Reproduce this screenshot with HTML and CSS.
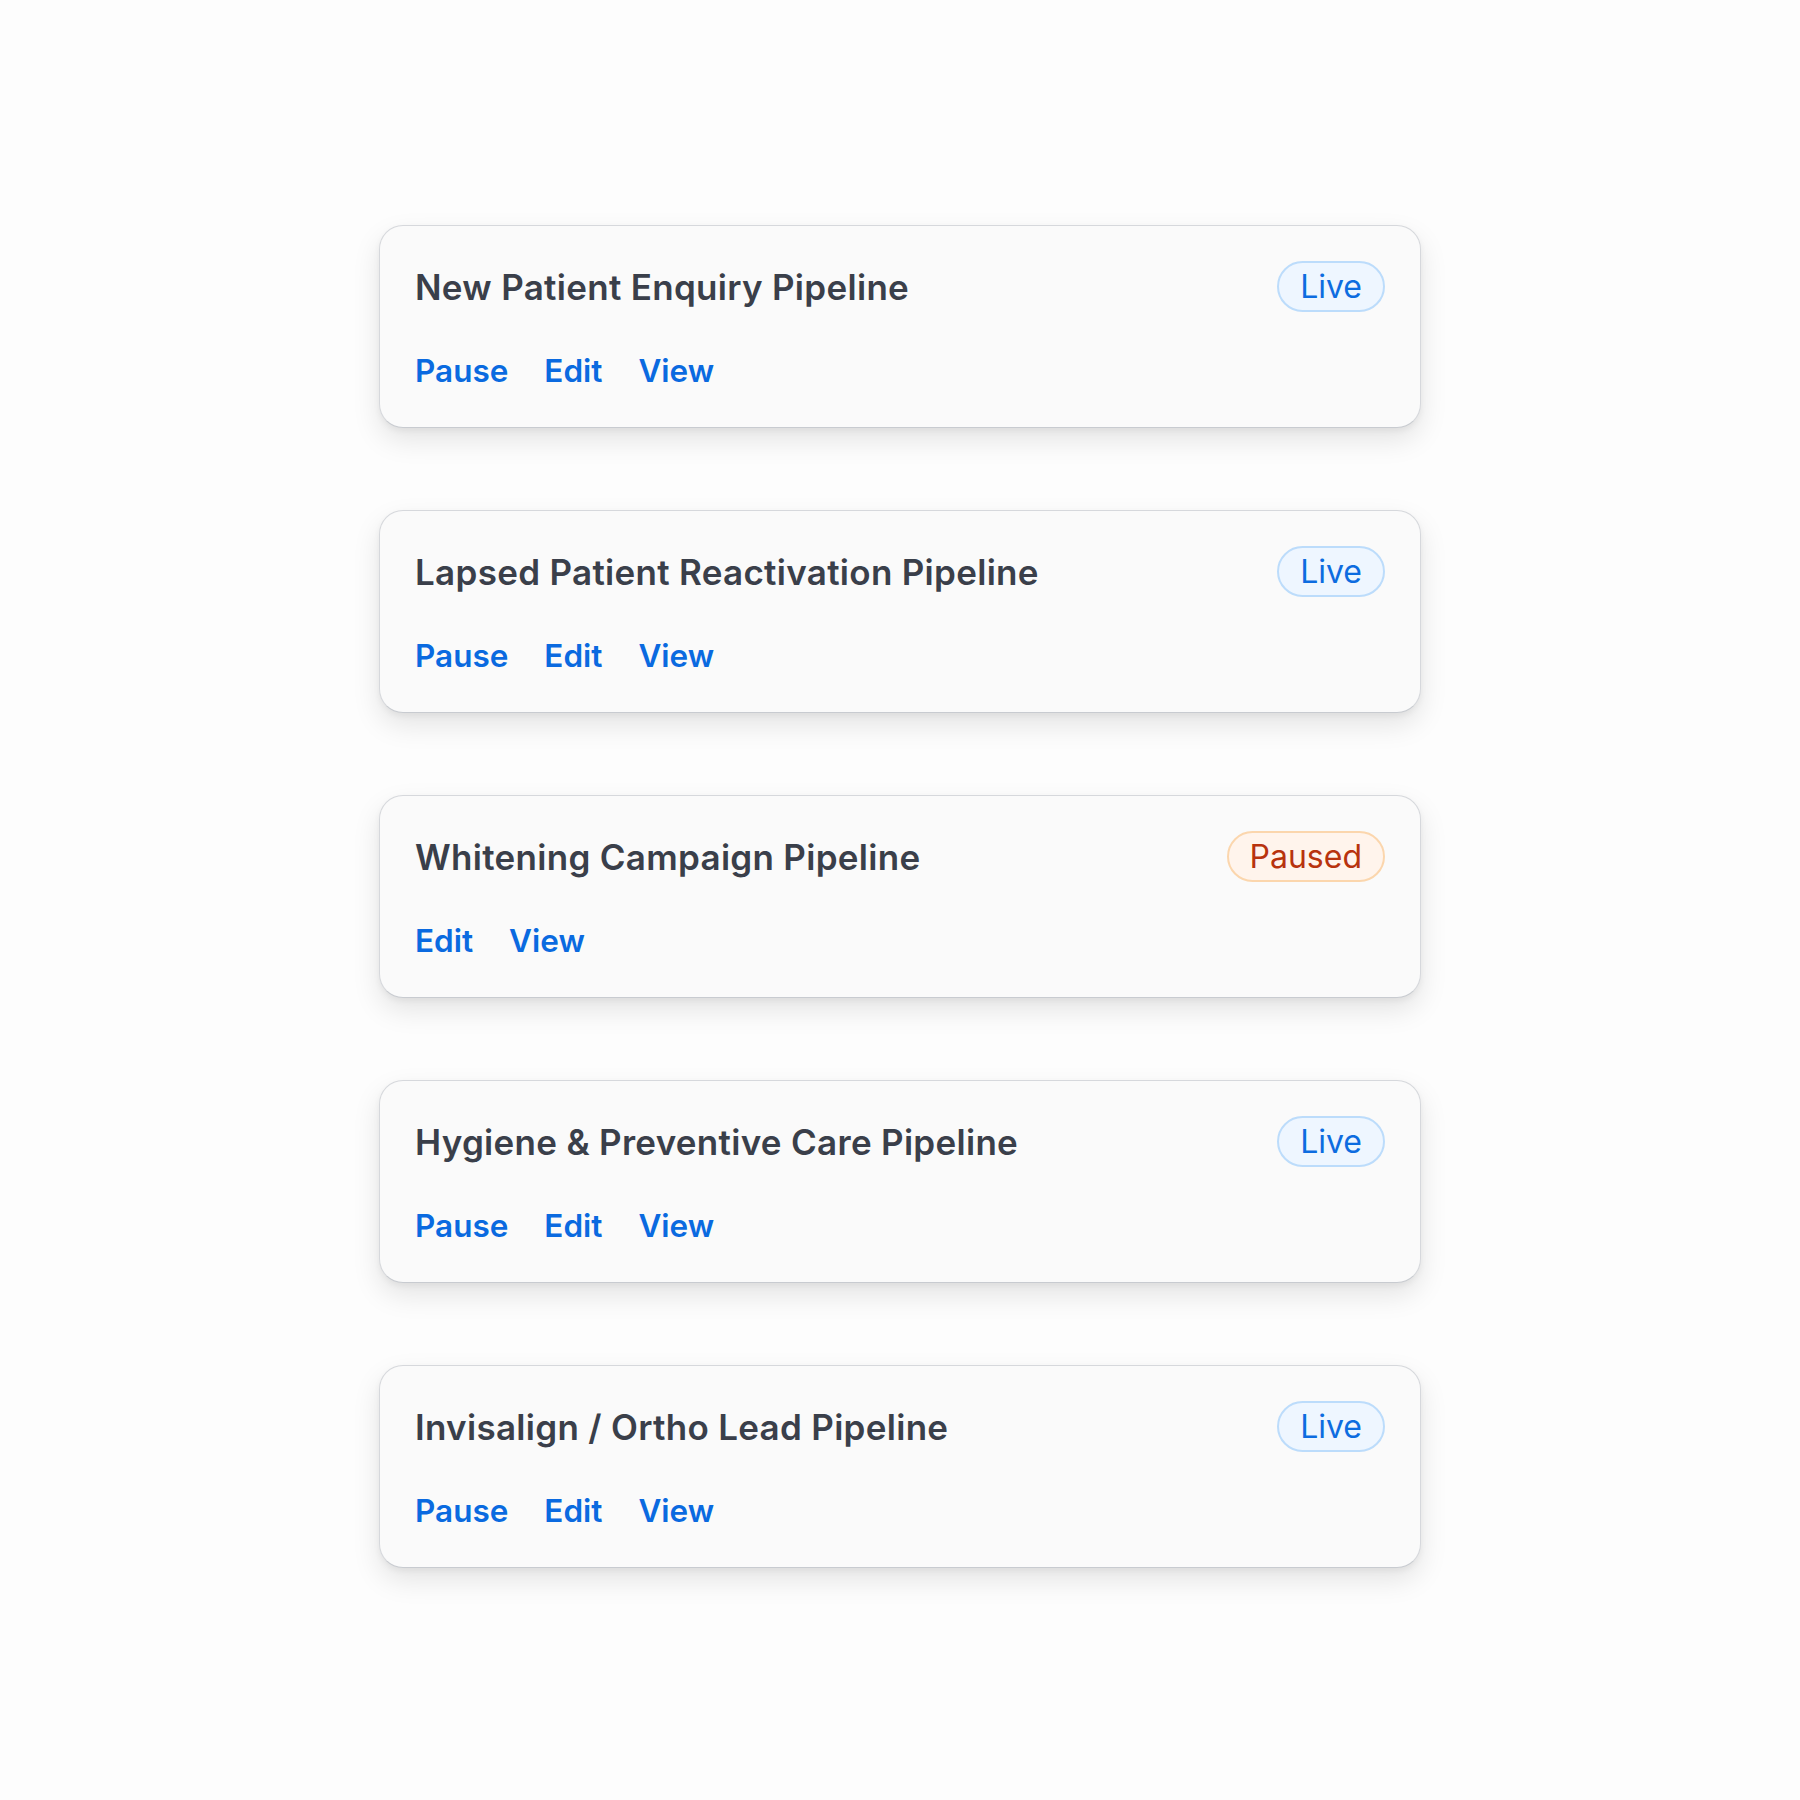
FILE: index.html
```html
<!DOCTYPE html>
<html lang="en">
<head>
<meta charset="utf-8">
<title>Pipelines</title>
<link rel="stylesheet" href="styles.css">
</head>
<body>
<main class="list">
  <section class="card">
    <div class="card-head">
      <h2 class="title">New Patient Enquiry Pipeline</h2>
      <span class="badge badge-live">Live</span>
    </div>
    <div class="actions">
      <a class="action" href="#">Pause</a>
      <a class="action" href="#">Edit</a>
      <a class="action" href="#">View</a>
    </div>
  </section>
  <section class="card">
    <div class="card-head">
      <h2 class="title">Lapsed Patient Reactivation Pipeline</h2>
      <span class="badge badge-live">Live</span>
    </div>
    <div class="actions">
      <a class="action" href="#">Pause</a>
      <a class="action" href="#">Edit</a>
      <a class="action" href="#">View</a>
    </div>
  </section>
  <section class="card">
    <div class="card-head">
      <h2 class="title">Whitening Campaign Pipeline</h2>
      <span class="badge badge-paused">Paused</span>
    </div>
    <div class="actions">
      <a class="action" href="#">Edit</a>
      <a class="action" href="#">View</a>
    </div>
  </section>
  <section class="card">
    <div class="card-head">
      <h2 class="title">Hygiene &amp; Preventive Care Pipeline</h2>
      <span class="badge badge-live">Live</span>
    </div>
    <div class="actions">
      <a class="action" href="#">Pause</a>
      <a class="action" href="#">Edit</a>
      <a class="action" href="#">View</a>
    </div>
  </section>
  <section class="card">
    <div class="card-head">
      <h2 class="title">Invisalign / Ortho Lead Pipeline</h2>
      <span class="badge badge-live">Live</span>
    </div>
    <div class="actions">
      <a class="action" href="#">Pause</a>
      <a class="action" href="#">Edit</a>
      <a class="action" href="#">View</a>
    </div>
  </section>
</main>
</body>
</html>
```

FILE: styles.css
```css
* {
  box-sizing: border-box;
}

html, body {
  margin: 0;
  padding: 0;
  background: #fdfdfd;
}

body {
  font-family: Inter, "Noto Sans", "Liberation Sans", sans-serif;
  color: #374151;
}

.list {
  display: flex;
  flex-direction: column;
  align-items: center;
  gap: 82px;
  padding-top: 225px;
  padding-bottom: 200px;
}

.card {
  width: 1042px;
  background: #fafafa;
  border: 1px solid #d6d8dc;
  border-bottom-color: #c8cbd0;
  border-radius: 24px;
  padding: 35px 35px 37px 35px;
  box-shadow: 0 12px 28px rgba(0, 0, 0, 0.10), 0 3px 6px rgba(0, 0, 0, 0.05);
}

.card-head {
  display: flex;
  align-items: center;
  justify-content: space-between;
  height: 51px;
}

.title {
  margin: 0;
  font-size: 35px;
  font-weight: 600;
  color: #3a3f4a;
  letter-spacing: 0.3px;
}

.badge {
  display: inline-flex;
  align-items: center;
  height: 51px;
  padding: 0 21px;
  border-radius: 999px;
  font-size: 32px;
  font-weight: 400;
  border: 2px solid;
}

.badge-live {
  color: #0d6ce0;
  background: #eef6ff;
  border-color: #bcdcfb;
}

.badge-paused {
  color: #b8330e;
  background: #fff4ec;
  border-color: #fbd6ad;
}

.actions {
  display: flex;
  gap: 36px;
  margin-top: 40px;
  line-height: 38px;
}

.action {
  font-size: 31.5px;
  font-weight: 600;
  color: #0a6ae0;
  text-decoration: none;
}
```
